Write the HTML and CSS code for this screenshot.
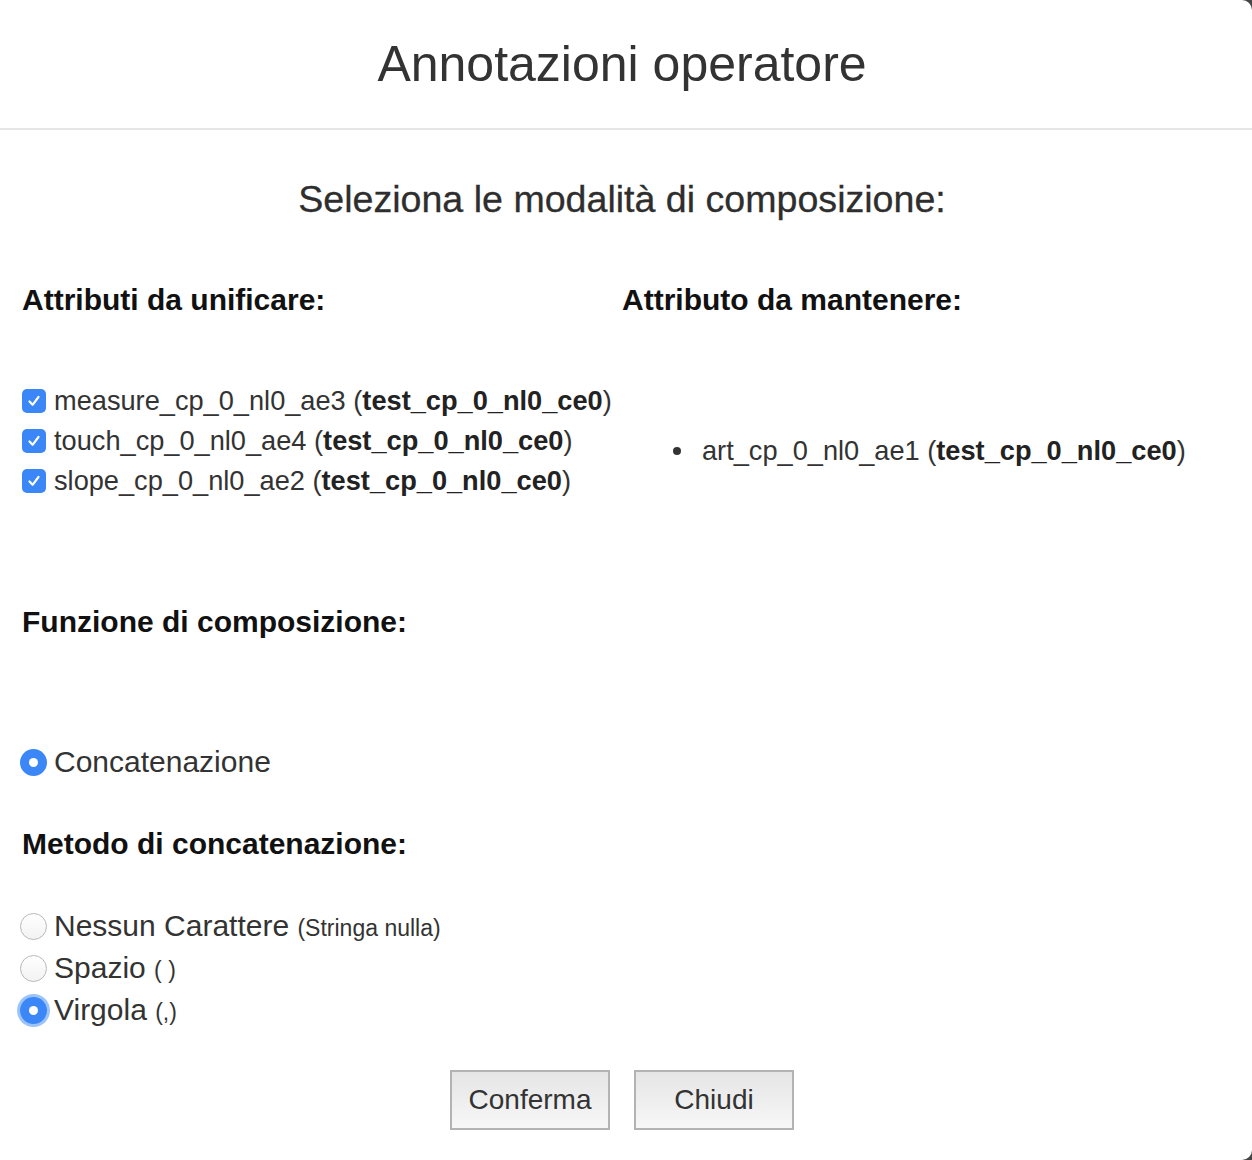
FILE: index.html
```html
<!DOCTYPE html>
<html lang="it">
<head>
<meta charset="utf-8">
<title>Annotazioni operatore</title>
<link rel="stylesheet" href="styles.css">
</head>
<body>
<div class="dialog">
  <header class="header">
    <h1 class="title">Annotazioni operatore</h1>
  </header>
  <main class="content">
    <h2 class="subtitle">Seleziona le modalità di composizione:</h2>
    <div class="columns">
      <section class="col">
        <h3 class="heading">Attributi da unificare:</h3>
        <ul class="check-list">
          <li class="check-row"><span class="box"><svg width="16" height="16" viewBox="0 0 16 16"><path d="M3.5 8.5 L6.6 11.8 L12.5 4" fill="none" stroke="#fff" stroke-width="2.2" stroke-linecap="round" stroke-linejoin="round"/></svg></span><span>measure_cp_0_nl0_ae3 (<b class="strong">test_cp_0_nl0_ce0</b>)</span></li>
          <li class="check-row"><span class="box"><svg width="16" height="16" viewBox="0 0 16 16"><path d="M3.5 8.5 L6.6 11.8 L12.5 4" fill="none" stroke="#fff" stroke-width="2.2" stroke-linecap="round" stroke-linejoin="round"/></svg></span><span>touch_cp_0_nl0_ae4 (<b class="strong">test_cp_0_nl0_ce0</b>)</span></li>
          <li class="check-row"><span class="box"><svg width="16" height="16" viewBox="0 0 16 16"><path d="M3.5 8.5 L6.6 11.8 L12.5 4" fill="none" stroke="#fff" stroke-width="2.2" stroke-linecap="round" stroke-linejoin="round"/></svg></span><span>slope_cp_0_nl0_ae2 (<b class="strong">test_cp_0_nl0_ce0</b>)</span></li>
        </ul>
      </section>
      <section class="col">
        <h3 class="heading">Attributo da mantenere:</h3>
        <ul class="keep-list">
          <li class="keep-item"><span class="bullet"></span><span>art_cp_0_nl0_ae1 (<b class="strong">test_cp_0_nl0_ce0</b>)</span></li>
        </ul>
      </section>
    </div>

    <h3 class="heading heading-func">Funzione di composizione:</h3>
    <div class="radio-row radio-single"><span class="radio checked"></span><span>Concatenazione</span></div>

    <h3 class="heading heading-method">Metodo di concatenazione:</h3>
    <div class="radio-list">
      <div class="radio-row"><span class="radio"></span><span>Nessun Carattere <small class="hint">(Stringa nulla)</small></span></div>
      <div class="radio-row"><span class="radio"></span><span>Spazio <small class="hint">( )</small></span></div>
      <div class="radio-row"><span class="radio checked focused"></span><span>Virgola <small class="hint">(,)</small></span></div>
    </div>

    <div class="actions">
      <button class="btn" type="button">Conferma</button>
      <button class="btn" type="button">Chiudi</button>
    </div>
  </main>
</div>
</body>
</html>
```

FILE: styles.css
```css
html, body {
  margin: 0;
  padding: 0;
}

body {
  background: #444444;
  font-family: "Liberation Sans", Arial, Helvetica, sans-serif;
  color: #333333;
}

.dialog {
  width: 1252px;
  height: 1160px;
  background: #ffffff;
  border-radius: 0 10px 10px 0;
  overflow: hidden;
  box-sizing: border-box;
}

.header {
  height: 128px;
  border-bottom: 2px solid #e6e6e6;
  display: flex;
  align-items: center;
  justify-content: center;
  padding-right: 8px;
}

.title {
  margin: 0;
  font-size: 50px;
  font-weight: normal;
  color: #333333;
}

.content {
  padding: 0 30px 0 22px;
}

.subtitle {
  margin: 47px 0 0;
  font-size: 37.6px;
  line-height: 44px;
  font-weight: normal;
  text-align: center;
  color: #2e2e2e;
  -webkit-text-stroke: 0.3px #2e2e2e;
}

.columns {
  display: grid;
  grid-template-columns: 1fr 1fr;
  margin-top: 61px;
}

.heading {
  margin: 0;
  font-size: 30px;
  line-height: 36px;
  font-weight: bold;
  color: #111111;
}

.check-list {
  list-style: none;
  margin: 63px 0 0;
  padding: 0;
}

.check-row {
  display: flex;
  align-items: center;
  height: 40px;
  gap: 8px;
  font-size: 27.2px;
  color: #333333;
}

.strong {
  color: #222222;
}

.box {
  flex: none;
  width: 24px;
  height: 24px;
  border-radius: 5px;
  background: #3b87f7;
  display: flex;
  align-items: center;
  justify-content: center;
}

.keep-list {
  list-style: none;
  margin: 113px 0 0;
  padding: 0 0 0 51px;
}

.keep-item {
  display: flex;
  align-items: center;
  height: 40px;
  font-size: 27.2px;
  color: #333333;
}

.bullet {
  flex: none;
  width: 8px;
  height: 8px;
  border-radius: 50%;
  background: #333333;
  margin-right: 21px;
}

.heading-func {
  margin-top: 103px;
}

.radio-row {
  display: flex;
  align-items: center;
  gap: 7px;
  height: 42px;
  font-size: 30px;
  color: #333333;
  margin-left: -2px;
}

.radio-single {
  margin-top: 101px;
}

.heading-method {
  margin-top: 43px;
}

.radio-list {
  margin-top: 43px;
}

.radio {
  flex: none;
  width: 27px;
  height: 27px;
  border-radius: 50%;
  box-sizing: border-box;
  border: 1px solid #b8b8b8;
  background: linear-gradient(#ffffff, #f2f2f2);
  display: flex;
  align-items: center;
  justify-content: center;
}

.radio.checked {
  border: none;
  background: #3b87f7;
}

.radio.checked::after {
  content: "";
  width: 9px;
  height: 9px;
  border-radius: 50%;
  background: #ffffff;
}

.radio.focused {
  box-shadow: 0 0 0 3px rgba(59, 135, 247, 0.5);
}

.hint {
  font-size: 23px;
}

.actions {
  display: flex;
  justify-content: center;
  gap: 24px;
  margin-top: 39px;
}

.btn {
  width: 160px;
  height: 60px;
  box-sizing: border-box;
  border: 2px solid #b3b3b3;
  border-radius: 0;
  background: linear-gradient(#e5e5e5, #f7f7f7);
  font-family: "Liberation Sans", Arial, Helvetica, sans-serif;
  font-size: 28px;
  color: #333333;
  padding: 0;
}
```
